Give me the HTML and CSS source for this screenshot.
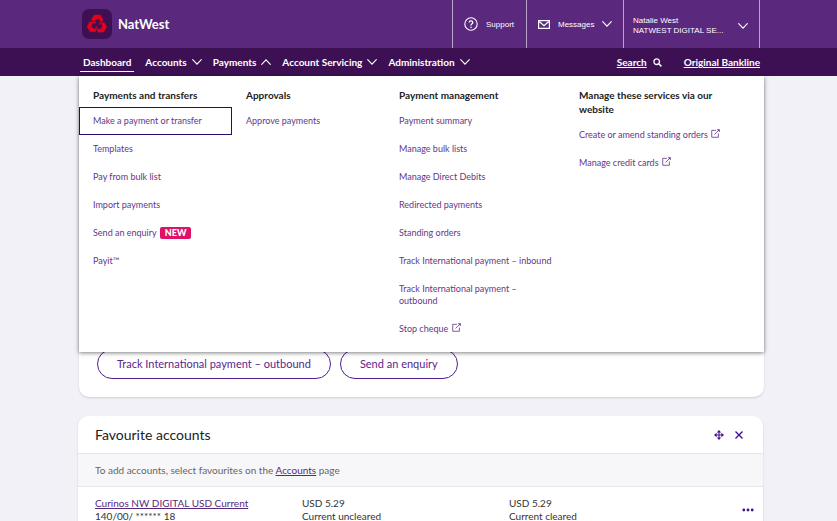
FILE: index.html
```
<!DOCTYPE html>
<html lang="en">
<head>
    <meta charset="UTF-8">
    <meta name="viewport" content="width=device-width, initial-scale=1.0">
    <title>NatWest Bankline</title>
    <link rel="stylesheet" href="styles.css">
</head>
<body>
    <svg width="0" height="0" class="sprite" aria-hidden="true">
        <symbol id="chevron" viewBox="0 0 10 6"><path d="M.7.7 5 5.2 9.3.7" fill="none" stroke="currentColor" stroke-width="1.1" stroke-linecap="round"/></symbol>
        <symbol id="external" viewBox="0 0 10 10"><path d="M5.500 1.500H.8v7.700h7.400V5M4 6l4.500-4.500" fill="none" stroke="currentColor" stroke-width=".9"/><path d="M6.300.3H9.700V3.700z" fill="currentColor"/></symbol>
    </svg>

    <header>
        <div class="top-bar">
            <a class="brand" href="#">
                <svg class="logo" viewBox="0 0 30 30" aria-hidden="true">
                    <rect width="30" height="30" rx="7" fill="#3c1053"/>
                    <g id="arm">
                        <path d="M12 5.500h6.500l3 5-3 5.200h-2.300l1.800-3.200-1.300-2.200h-3l-1.900 3.300-2.900-3z" fill="#e2001a" stroke="#3c1053" stroke-width=".4"/>
                    </g>
                    <use href="#arm" transform="rotate(120 15 15.500)"/>
                    <use href="#arm" transform="rotate(240 15 15.500)"/>
                </svg>
                <span>NatWest</span>
            </a>
            <div class="tools">
                <button class="tool support">
                    <svg class="icon-help" viewBox="0 0 14 14" aria-hidden="true"><circle cx="7" cy="7" r="6.200" fill="none" stroke="currentColor" stroke-width="1.100"/><path d="M5.200 5.600c0-2.300 3.600-2.300 3.600 0C8.800 6.900 7 6.800 7 8.400" fill="none" stroke="currentColor" stroke-width="1.300"/><circle cx="7" cy="10.200" r=".8" fill="currentColor"/></svg>
                    <span>Support</span>
                </button>
                <button class="tool messages">
                    <svg class="icon-mail" viewBox="0 0 12 9" aria-hidden="true"><path d="M.6.6h10.800v7.800H.6zM1.500 1.800 6 5.800l4.500-4" fill="none" stroke="currentColor" stroke-width="1.200"/></svg>
                    <span>Messages</span>
                    <svg class="chevron" aria-hidden="true"><use href="#chevron"/></svg>
                </button>
                <button class="tool user">
                    <span class="user-name">Natalie West<br>NATWEST DIGITAL SE...</span>
                    <svg class="chevron" aria-hidden="true"><use href="#chevron"/></svg>
                </button>
            </div>
        </div>

        <div class="nav-bar">
            <nav>
                <a class="active" href="#">Dashboard</a>
                <button>Accounts <svg class="chevron" aria-hidden="true"><use href="#chevron"/></svg></button>
                <button aria-expanded="true">Payments <svg class="chevron up" aria-hidden="true"><use href="#chevron"/></svg></button>
                <button>Account Servicing <svg class="chevron" aria-hidden="true"><use href="#chevron"/></svg></button>
                <button>Administration <svg class="chevron" aria-hidden="true"><use href="#chevron"/></svg></button>
            </nav>
            <div class="nav-links">
                <a href="#"><span>Search</span><svg class="icon-search" viewBox="0 0 9 9" aria-hidden="true"><circle cx="3.700" cy="3.700" r="2.800" fill="none" stroke="currentColor" stroke-width="1.300"/><path d="m5.800 5.800 2.600 2.600" stroke="currentColor" stroke-width="1.600"/></svg></a>
                <a href="#"><span>Original Bankline</span></a>
            </div>

            <div class="mega-menu">
                <section>
                    <h2>Payments and transfers</h2>
                    <ul>
                        <li><a class="focused" href="#">Make a payment or transfer</a></li>
                        <li><a href="#">Templates</a></li>
                        <li><a href="#">Pay from bulk list</a></li>
                        <li><a href="#">Import payments</a></li>
                        <li><a href="#">Send an enquiry <span class="badge">NEW</span></a></li>
                        <li><a href="#">Payit™</a></li>
                    </ul>
                </section>
                <section>
                    <h2>Approvals</h2>
                    <ul>
                        <li><a href="#">Approve payments</a></li>
                    </ul>
                </section>
                <section>
                    <h2>Payment management</h2>
                    <ul>
                        <li><a href="#">Payment summary</a></li>
                        <li><a href="#">Manage bulk lists</a></li>
                        <li><a href="#">Manage Direct Debits</a></li>
                        <li><a href="#">Redirected payments</a></li>
                        <li><a href="#">Standing orders</a></li>
                        <li><a href="#">Track International payment – inbound</a></li>
                        <li><a href="#">Track International payment – outbound</a></li>
                        <li><a href="#">Stop cheque <svg class="external" aria-hidden="true"><use href="#external"/></svg></a></li>
                    </ul>
                </section>
                <section>
                    <h2>Manage these services via our website</h2>
                    <ul>
                        <li><a href="#">Create or amend standing orders <svg class="external" aria-hidden="true"><use href="#external"/></svg></a></li>
                        <li><a href="#">Manage credit cards <svg class="external" aria-hidden="true"><use href="#external"/></svg></a></li>
                    </ul>
                </section>
            </div>
        </div>
    </header>

    <main>
        <section class="card shortcuts">
            <button class="pill">Track International payment – outbound</button>
            <button class="pill">Send an enquiry</button>
        </section>

        <section class="card favourites">
            <div class="card-header">
                <h1>Favourite accounts</h1>
                <button aria-label="Move">
                    <svg viewBox="0 0 10 10" aria-hidden="true"><path d="M5 1v8M1 5h8" stroke="currentColor" stroke-width="1.100"/><path d="M5 0 7.200 2.600H2.800zM5 10 2.800 7.400h4.400zM0 5l2.600-2.200v4.400zM10 5 7.400 7.200V2.800z" fill="currentColor"/></svg>
                </button>
                <button aria-label="Close">
                    <svg viewBox="0 0 10 10" aria-hidden="true"><path d="m1.500 1.500 7 7m0-7-7 7" stroke="currentColor" stroke-width="1.400"/></svg>
                </button>
            </div>
            <p class="hint">To add accounts, select favourites on the <a href="#">Accounts</a> page</p>
            <div class="account">
                <div><a href="#">Curinos NW DIGITAL USD Current</a><br>140/00/ ****** 18</div>
                <div>USD 5.29<br>Current uncleared</div>
                <div>USD 5.29<br>Current cleared</div>
                <button aria-label="More options">
                    <svg viewBox="0 0 12 4" aria-hidden="true"><circle cx="1.800" cy="2" r="1.400"/><circle cx="6" cy="2" r="1.400"/><circle cx="10.200" cy="2" r="1.400"/></svg>
                </button>
            </div>
        </section>
    </main>
</body>
</html>
```
FILE: styles.css
```
* {
    box-sizing: border-box;
}
body {
    margin: 0;
    font-family: Lato, "Open Sans", sans-serif;
    font-size: 10px;
    color: #333333;
    background-color: #f2f1f7;
    overflow: hidden;
}
h1, h2, p, ul {
    margin: 0;
    padding: 0;
}
ul {
    list-style: none;
}
a {
    color: #5a287d;
}
button {
    font: inherit;
    color: inherit;
    background: none;
    border: none;
    padding: 0;
    cursor: pointer;
}
svg {
    flex: none;
}
.sprite {
    position: absolute;
}
.chevron {
    width: 10px;
    height: 6px;
}
.chevron.up {
    transform: rotate(180deg);
}

/* top bar */
.top-bar {
    display: flex;
    justify-content: space-between;
    height: 48px;
    padding: 0 77px 0 82px;
    color: #ffffff;
    background-color: #5a287d;
}
.brand {
    display: flex;
    align-items: center;
    gap: 6px;
    color: #ffffff;
    font-size: 13px;
    font-weight: bold;
    text-decoration: none;
}
.logo {
    width: 30px;
    height: 30px;
}
.tools {
    display: flex;
    font-family: "Liberation Sans", Arial, sans-serif;
    font-size: 8px;
    border-right: 1px solid #b9a3cb;
}
.tool {
    display: flex;
    align-items: center;
    padding: 0 11px;
    border-left: 1px solid #b9a3cb;
}
.support {
    width: 74px;
    gap: 8px;
}
.messages {
    width: 97px;
    gap: 8px;
}
.user {
    width: 136px;
    padding: 4px 11px 0 9px;
    justify-content: space-between;
}
.user-name {
    line-height: 10px;
    text-align: left;
}
.icon-help {
    width: 14px;
    height: 14px;
}
.icon-mail {
    width: 12px;
    height: 9px;
}

/* navigation */
.nav-bar {
    position: relative;
    display: flex;
    justify-content: space-between;
    height: 28px;
    padding: 0 77px 0 80px;
    color: #ffffff;
    background-color: #3c1053;
}
nav {
    display: flex;
    align-items: center;
    gap: 11px;
    font-weight: bold;
}
nav button {
    display: flex;
    align-items: center;
    gap: 5px;
}
nav a {
    color: #ffffff;
    text-decoration: none;
}
nav .active {
    padding: 4px 3px 3px;
    border-bottom: 1px solid #ffffff;
}
.nav-links {
    display: flex;
    align-items: center;
    gap: 22px;
    font-weight: bold;
}
.nav-links a {
    display: flex;
    align-items: center;
    gap: 6px;
    color: #ffffff;
    text-decoration: none;
}
.nav-links span {
    text-decoration: underline;
}
.icon-search {
    width: 9px;
    height: 9px;
}

/* payments menu */
.mega-menu {
    position: absolute;
    top: 100%;
    left: 79px;
    right: 73px;
    z-index: 1;
    display: grid;
    grid-template-columns: 153fr 153fr 180fr 199fr;
    padding: 12px 0 9px;
    background-color: #ffffff;
    box-shadow: 0 1px 4px rgba(0, 0, 0, 0.5);
}
.mega-menu h2 {
    margin-bottom: 5px;
    padding: 0 30px 0 14px;
    font-size: 10px;
    line-height: 14px;
    color: #222222;
}
.mega-menu a {
    display: block;
    padding: 8px 10px 8px 14px;
    font-size: 9px;
    line-height: 12px;
    color: #65368a;
    text-decoration: none;
}
.mega-menu a.focused {
    outline: 1px solid #2b0a6b;
    outline-offset: -1px;
}
.badge {
    display: inline-block;
    margin-left: 1px;
    padding: 0 5px;
    border-radius: 2px;
    color: #ffffff;
    background-color: #dd1367;
    font-weight: 900;
}
.external {
    width: 9px;
    height: 9px;
    margin-left: 1px;
}

/* dashboard */
main {
    padding: 0 74px 0 78px;
}
.card {
    background-color: #ffffff;
    border-radius: 10px;
    box-shadow: 0 1px 2px rgba(0, 0, 0, 0.15);
}
.shortcuts {
    display: flex;
    align-items: flex-end;
    gap: 9px;
    min-height: 321px;
    margin: 0 -1px 19px 1px;
    padding: 18px;
}
.pill {
    padding: 6px 19px;
    border: 1px solid #4f1f91;
    border-radius: 15px;
    color: #5a2590;
    font-size: 11px;
    line-height: 16px;
}
.card-header {
    display: flex;
    align-items: center;
    gap: 10px;
    padding: 9px 19px 8px 17px;
    color: #42108a;
}
.card-header h1 {
    flex: 1;
    color: #222222;
    font-size: 14px;
    font-weight: normal;
    line-height: 20px;
}
.card-header svg {
    display: block;
    width: 10px;
    height: 10px;
}
.hint {
    padding: 8px 17px;
    border-top: 1px solid #e6e6ea;
    border-bottom: 1px solid #e6e6ea;
    color: #666666;
    background-color: #f7f7fa;
    line-height: 16px;
}
.account {
    display: grid;
    grid-template-columns: 207fr 207fr 233fr 12px;
    align-items: center;
    padding: 10px 9px 10px 17px;
    line-height: 13px;
}
.account button {
    color: #42108a;
}
.account svg {
    display: block;
    width: 12px;
    height: 4px;
    fill: currentColor;
}
```
